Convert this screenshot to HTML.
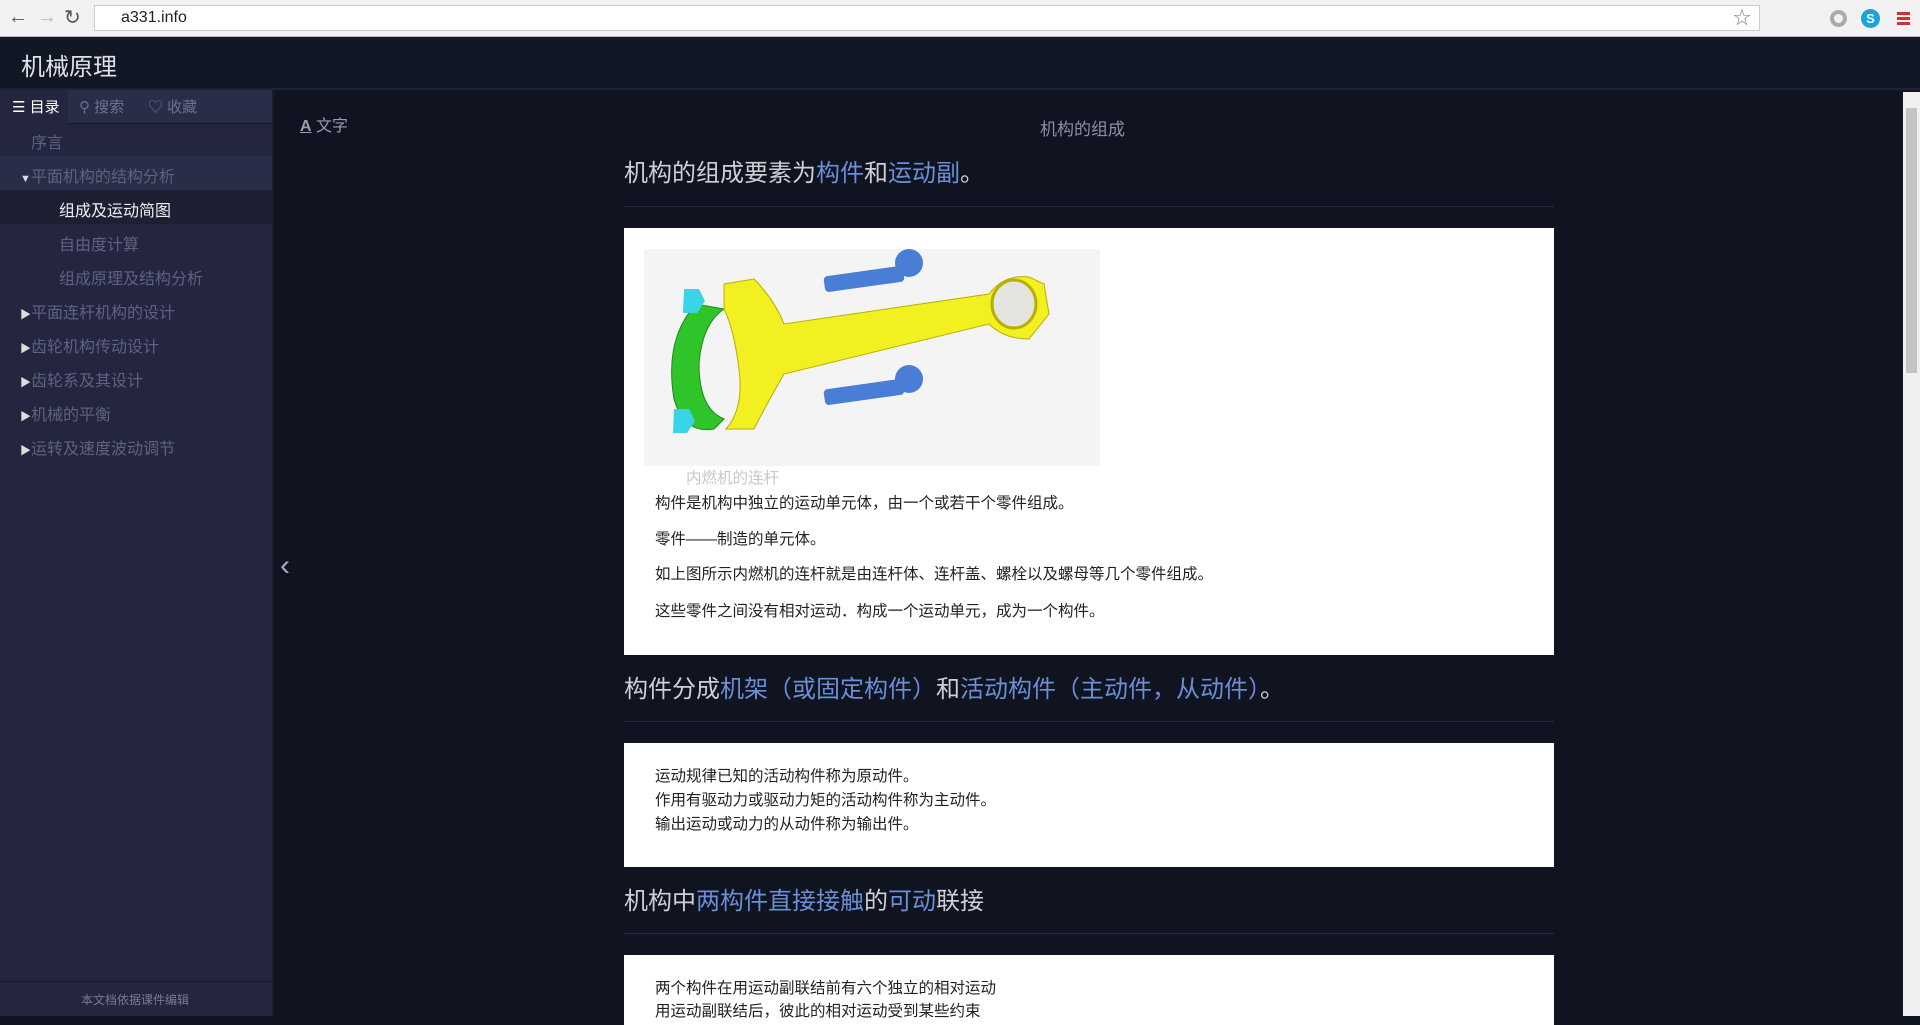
<!DOCTYPE html>
<html><head><meta charset="utf-8"><style>
*{margin:0;padding:0;box-sizing:border-box}
body{width:1920px;height:1016px;overflow:hidden;background:#0f1420;font-family:"Liberation Sans","Noto Sans CJK SC",sans-serif;position:relative}
.abs{position:absolute}
#chrome{left:0;top:0;width:1920px;height:37px;background:#f2f2f2;border-bottom:1px solid #bbb}
#url{left:94px;top:5px;width:1666px;height:26px;background:#fff;border:1px solid #ccc;font-size:16px;line-height:24px;padding-left:26px;color:#222}
#hdr{left:0;top:37px;width:1920px;height:53px;background:#121726;border-bottom:2px solid #1d2335}
#hdr span{position:absolute;left:21px;top:10px;color:#e0e0e6;font-size:24px}
#side{left:0;top:90px;width:274px;height:926px;background:#242640;border-right:2px solid #1a1c2c}
.tabs{height:34px;background:#2a2d48;border-bottom:1px solid #15172a;position:relative}
.tab{position:absolute;top:6px;font-size:15px;color:#6d7088}
.it{position:absolute;font-size:16px;color:#5e6180;white-space:nowrap}
.tri{font-size:11px;color:#ddd}
#main h2{position:absolute;left:624px;font-size:24px;font-weight:normal;color:#cfcfd6}
.lk{color:#6b8ed4}
.hr{position:absolute;left:624px;width:930px;height:1px;background:#262c3c}
.box{position:absolute;left:624px;width:930px;background:#fff}
.p{position:absolute;left:655px;font-size:15.5px;color:#222;white-space:nowrap}
</style></head><body>
<div id="chrome" class="abs">
<div class="abs" style="left:8px;top:6px;font-size:20px;color:#555">&#8592;</div>
<div class="abs" style="left:37px;top:6px;font-size:20px;color:#bbb">&#8594;</div>
<div class="abs" style="left:64px;top:5px;font-size:20px;color:#555">&#8635;</div>
<div id="url" class="abs">a331.info<span style="position:absolute;right:8px;top:0;color:#888;font-size:18px">&#9734;</span></div>
<div class="abs" style="left:1830px;top:10px;width:17px;height:17px;border:4px solid #aaa;border-radius:50%"></div>
<div class="abs" style="left:1861px;top:9px;width:19px;height:19px;background:#1aa3dc;border-radius:50%;color:#fff;font-size:13px;font-weight:bold;text-align:center;line-height:19px">S</div>
<div class="abs" style="left:1897px;top:12px;width:13px;height:13px;border-top:3px solid #c33;border-bottom:3px solid #c33"><div style="margin-top:2px;height:3px;background:#c33"></div></div>
</div>
<div id="hdr" class="abs"><span>机械原理</span></div>
<div id="side" class="abs">
<div class="tabs">
<div class="abs" style="left:0;top:0;width:68px;height:34px;background:#242640"></div>
<div class="tab" style="left:12px;color:#fff">&#9776; 目录</div>
<div class="tab" style="left:79px">&#9906; 搜索</div>
<div class="tab" style="left:148px">&#9825; 收藏</div>
</div>
<div class="it" style="left:31px;top:39px">序言</div>
<div class="abs" style="left:0;top:66px;width:272px;height:34px;background:#2a2d48"></div>
<div class="it" style="left:20px;top:73px"><span class="tri">&#9660;</span>平面机构的结构分析</div>
<div class="abs" style="left:0;top:100px;width:272px;height:34px;background:#1d1f33"></div>
<div class="it" style="left:59px;top:107px;color:#f0f0f0">组成及运动简图</div>
<div class="it" style="left:59px;top:141px">自由度计算</div>
<div class="it" style="left:59px;top:175px">组成原理及结构分析</div>
<div class="it" style="left:20px;top:209px"><span class="tri">&#9654;</span>平面连杆机构的设计</div>
<div class="it" style="left:20px;top:243px"><span class="tri">&#9654;</span>齿轮机构传动设计</div>
<div class="it" style="left:20px;top:277px"><span class="tri">&#9654;</span>齿轮系及其设计</div>
<div class="it" style="left:20px;top:311px"><span class="tri">&#9654;</span>机械的平衡</div>
<div class="it" style="left:20px;top:345px"><span class="tri">&#9654;</span>运转及速度波动调节</div>
<div class="abs" style="left:0;top:891px;width:272px;height:1px;background:#15172a"></div>
<div class="it" style="left:81px;top:901px;font-size:12px;color:#777a92">本文档依据课件编辑</div>
</div>
<div class="abs" style="left:280px;top:549px;font-size:30px;color:#aab">&#8249;</div>
<div id="main">
<div class="abs" style="left:300px;top:112px;font-size:16px;color:#9a9eb0"><u style="font-weight:bold">A</u> 文字</div>
<div class="abs" style="left:1040px;top:115px;font-size:17px;color:#8c90a0">机构的组成</div>
<h2 style="top:153px">机构的组成要素为<span class="lk">构件</span>和<span class="lk">运动副</span>。</h2>
<div class="hr" style="top:206px"></div>
<div class="box" style="top:228px;height:427px"></div>
<svg class="abs" style="left:644px;top:249px" width="456" height="217" viewBox="0 0 456 217">
<rect width="456" height="217" fill="#f4f4f4"/>
<path d="M52 55 Q20 90 30 150 Q40 185 70 180 L80 170 Q55 160 55 115 Q58 75 80 60Z" fill="#2fc42a" stroke="#1a8a18"/>
<path d="M80 35 L110 30 Q130 50 140 75 L345 45 Q360 25 385 28 L400 35 L405 65 L385 90 Q360 90 345 75 L140 125 Q120 160 110 180 L82 180 Q100 160 95 120 Q90 80 80 60Z" fill="#f2f020" stroke="#b8b000"/>
<ellipse cx="370" cy="55" rx="22" ry="24" fill="#e4e4e0" stroke="#b8b000" stroke-width="3"/>
<path d="M40 40 l15 0 l6 12 l-8 12 l-14 0 z" fill="#3ad4e8"/>
<path d="M30 160 l15 0 l6 12 l-8 12 l-14 0 z" fill="#3ad4e8"/>
<rect x="180" y="22" width="80" height="16" rx="4" fill="#4a7ed6" transform="rotate(-8 220 30)"/>
<circle cx="265" cy="14" r="14" fill="#4a7ed6"/>
<rect x="180" y="135" width="80" height="16" rx="4" fill="#4a7ed6" transform="rotate(-8 220 143)"/>
<circle cx="265" cy="130" r="14" fill="#4a7ed6"/>
</svg>
<div class="p" style="left:686px;top:466px;color:#c8c8c8">内燃机的连杆</div>
<div class="p" style="top:491px">构件是机构中独立的运动单元体，由一个或若干个零件组成。</div>
<div class="p" style="top:527px">零件——制造的单元体。</div>
<div class="p" style="top:562px">如上图所示内燃机的连杆就是由连杆体、连杆盖、螺栓以及螺母等几个零件组成。</div>
<div class="p" style="top:599px">这些零件之间没有相对运动．构成一个运动单元，成为一个构件。</div>
<h2 style="top:669px">构件分成<span class="lk">机架（或固定构件）</span>和<span class="lk">活动构件（主动件，从动件）</span>。</h2>
<div class="hr" style="top:721px"></div>
<div class="box" style="top:743px;height:124px"></div>
<div class="p" style="top:764px">运动规律已知的活动构件称为原动件。</div>
<div class="p" style="top:788px">作用有驱动力或驱动力矩的活动构件称为主动件。</div>
<div class="p" style="top:812px">输出运动或动力的从动件称为输出件。</div>
<h2 style="top:881px">机构中<span class="lk">两构件直接接触</span>的<span class="lk">可动</span>联接</h2>
<div class="hr" style="top:933px"></div>
<div class="box" style="top:955px;height:70px"></div>
<div class="p" style="top:976px">两个构件在用运动副联结前有六个独立的相对运动</div>
<div class="p" style="top:999px">用运动副联结后，彼此的相对运动受到某些约束</div>
</div>
<div class="abs" style="left:1903px;top:92px;width:17px;height:924px;background:#f0f0f0"></div>
<div class="abs" style="left:1906px;top:108px;width:11px;height:265px;background:#c4c4c4"></div>
</body></html>
